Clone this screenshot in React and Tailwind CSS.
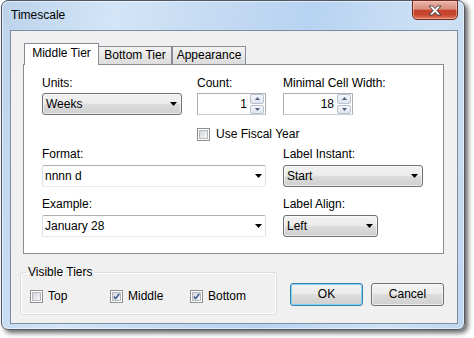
import React from 'react';

const DropArrow = () => (
  <svg width="7" height="4" viewBox="0 0 7 4" className="shrink-0">
    <path d="M0 0h7L3.5 4z" fill="#000" />
  </svg>
);

function Combo({ value, className }) {
  return (
    <div
      className={`h-[22px] rounded-[3px] border border-[#707070] bg-[linear-gradient(#f2f2f2_0%,#ebebeb_50%,#dddddd_50%,#cfcfcf_100%)] shadow-[inset_0_0_0_1px_rgba(255,255,255,0.55)] flex items-center justify-between pl-[3px] pr-[4px] ${className}`}
    >
      <span>{value}</span>
      <DropArrow />
    </div>
  );
}

function EditCombo({ value }) {
  return (
    <div className="h-[22px] w-[224px] rounded-[2px] border border-[#abadb3] border-x-[#dbdfe6] border-b-[#e3e9ef] bg-white flex items-center justify-between pl-[2px] pr-[3px]">
      <span>{value}</span>
      <DropArrow />
    </div>
  );
}

function SpinBox({ value, className }) {
  return (
    <div className={`h-[22px] border border-[#abadb3] border-b-[#c7cdd6] bg-white flex items-center justify-end pr-px ${className}`}>
      <span className="mr-[3px]">{value}</span>
      <div className="flex flex-col gap-px w-[14px] h-[20px]">
        <div className="flex-1 rounded-[2px] border border-[#b7c1cf] bg-[linear-gradient(#f4f6f9,#dfe5ed)] flex items-center justify-center">
          <svg width="5" height="3" viewBox="0 0 5 3">
            <path d="M0 3h5L2.5 0z" fill="#4d6185" />
          </svg>
        </div>
        <div className="flex-1 rounded-[2px] border border-[#b7c1cf] bg-[linear-gradient(#f4f6f9,#dfe5ed)] flex items-center justify-center">
          <svg width="5" height="3" viewBox="0 0 5 3">
            <path d="M0 0h5L2.5 3z" fill="#4d6185" />
          </svg>
        </div>
      </div>
    </div>
  );
}

function CheckBox({ checked }) {
  return (
    <div className="w-[13px] h-[13px] shrink-0 border border-[#8f8f8f] bg-white p-px">
      <div className="w-full h-full border border-[#b5b9bf] bg-[linear-gradient(135deg,#d2d5da,#f7f7f7)] flex items-center justify-center">
        {checked && (
          <svg width="7" height="7" viewBox="0 0 7 7">
            <path d="M0.8 3.6 L2.7 5.6 L6.3 0.8" fill="none" stroke="#4a5f97" strokeWidth="1.6" />
          </svg>
        )}
      </div>
    </div>
  );
}

function Field({ label, children, className }) {
  return (
    <div className={className}>
      <div className="h-[15px]">{label}</div>
      {children}
    </div>
  );
}

export default function App() {
  return (
    <div className="w-[474px] h-[338px] bg-white font-['Liberation_Sans',Arial,sans-serif] text-[12px] leading-[15px] text-black">
      <div className="ml-px w-[464px] h-[330px] rounded-[7px] border border-[#4f5863] bg-[linear-gradient(100deg,#bcd3ec_0%,#d3e5f7_22%,#c2d9f2_45%,#b7d3f1_60%,#cfe2f5_85%,#bed6ef_100%)] shadow-[inset_0_0_0_1px_rgba(255,255,255,0.55),3px_3px_5px_rgba(0,0,0,0.6)] flex flex-col">
        {/* title bar */}
        <div className="h-[29px] flex items-start justify-between shrink-0">
          <div className="pl-[9px] pt-[7px]">Timescale</div>
          <div className="-mt-px mr-[6px] w-[46px] h-[20px] rounded-b-[5px] border border-[#6e2b22] bg-[linear-gradient(#eab5a9_0%,#da8c7c_45%,#c6432f_52%,#c7452e_75%,#e07a5c_100%)] shadow-[inset_0_0_0_1px_rgba(255,220,210,0.45)] flex items-center justify-center">
            <svg width="14" height="11" viewBox="0 0 14 11">
              <path
                d="M1 1H4.6L7 3.7L9.4 1H13L8.9 5.5L13 10H9.4L7 7.3L4.6 10H1L5.1 5.5Z"
                fill="#fff"
                stroke="#3d3d3d"
                strokeWidth="0.9"
                strokeLinejoin="round"
              />
            </svg>
          </div>
        </div>

        {/* client area */}
        <div className="ml-[8px] w-[448px] h-[294px] border border-[#7b8da0] bg-[#f0f0f0]">
          <div className="ml-[12px] mt-[12px] w-[421px]">
            {/* tabs */}
            <div className="h-[21px] flex items-end pl-px">
              <div className="relative z-10 -mb-px w-[75px] h-[22px] border border-b-0 border-[#898c95] bg-white flex justify-center pt-[2px]">
                Middle Tier
              </div>
              <div className="w-[73px] h-[18px] border-t border-r border-[#898c95] bg-[linear-gradient(#f3f3f3,#dcdcdc)] flex justify-center pt-px">
                Bottom Tier
              </div>
              <div className="w-[74px] h-[18px] border-t border-x border-[#898c95] bg-[linear-gradient(#f3f3f3,#dcdcdc)] flex justify-center pt-px">
                Appearance
              </div>
            </div>

            {/* panel */}
            <div className="h-[190px] border border-[#898c95] bg-white pl-[18px] pt-[11px]">
              <div className="flex">
                <Field label="Units:" className="w-[155px]">
                  <Combo value="Weeks" className="mt-[2px] w-[140px]" />
                </Field>
                <Field label="Count:" className="w-[86px]">
                  <SpinBox value="1" className="mt-[2px] w-[69px]" />
                </Field>
                <Field label="Minimal Cell Width:">
                  <SpinBox value="18" className="mt-[2px] w-[70px]" />
                </Field>
              </div>

              <div className="mt-[12px] pl-[155px] flex items-center gap-[6px]">
                <CheckBox />
                <span>Use Fiscal Year</span>
              </div>

              <div className="mt-[5px] flex">
                <Field label="Format:" className="w-[241px]">
                  <div className="mt-[3px]">
                    <EditCombo value="nnnn d" />
                  </div>
                </Field>
                <Field label="Label Instant:">
                  <Combo value="Start" className="mt-[3px] w-[140px]" />
                </Field>
              </div>

              <div className="mt-[10px] flex">
                <Field label="Example:" className="w-[241px]">
                  <div className="mt-[3px]">
                    <EditCombo value="January 28" />
                  </div>
                </Field>
                <Field label="Label Align:">
                  <Combo value="Left" className="mt-[3px] w-[95px]" />
                </Field>
              </div>
            </div>
          </div>

          {/* bottom row */}
          <div className="mt-[11px] ml-[9px] flex items-start">
            <fieldset className="w-[257px] rounded-[3px] border border-[#d5dfe5] pl-[5px] pb-[10px] shadow-[inset_0_0_0_1px_#fff]">
              <legend className="px-[2px]">Visible Tiers</legend>
              <div className="mt-[9px] ml-[4px] flex">
                <div className="w-[80px] flex items-center gap-[5px]">
                  <CheckBox />
                  <span>Top</span>
                </div>
                <div className="w-[80px] flex items-center gap-[5px]">
                  <CheckBox checked />
                  <span>Middle</span>
                </div>
                <div className="flex items-center gap-[5px]">
                  <CheckBox checked />
                  <span>Bottom</span>
                </div>
              </div>
            </fieldset>
            <button className="ml-[13px] mt-[18px] w-[73px] h-[23px] rounded-[3px] border border-[#3c7fb1] bg-[linear-gradient(#f2f2f2_0%,#ebebeb_50%,#dddddd_50%,#cfcfcf_100%)] shadow-[inset_0_0_0_1px_#7fd3f5]">
              OK
            </button>
            <button className="ml-[8px] mt-[18px] w-[73px] h-[23px] rounded-[3px] border border-[#707070] bg-[linear-gradient(#f2f2f2_0%,#ebebeb_50%,#dddddd_50%,#cfcfcf_100%)] shadow-[inset_0_0_0_1px_rgba(255,255,255,0.6)]">
              Cancel
            </button>
          </div>
        </div>
      </div>
    </div>
  );
}
